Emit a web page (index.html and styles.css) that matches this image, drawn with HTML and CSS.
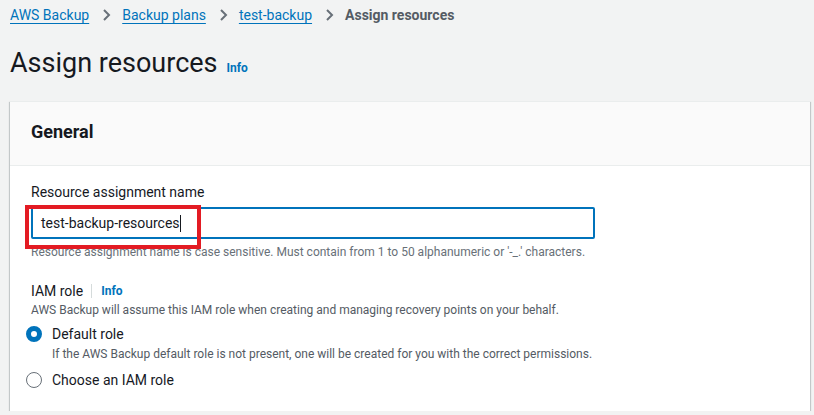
FILE: index.html
```html
<!DOCTYPE html>
<html>
<head>
<meta charset="utf-8">
<link rel="stylesheet" href="styles.css">
</head>
<body>
<nav class="crumbs">
  <a class="crumb" href="#">AWS Backup</a>
  <svg class="chev" width="16" height="16" viewBox="0 0 16 16"><path d="M6 3l5 5-5 5" fill="none" stroke="#687078" stroke-width="2"/></svg>
  <a class="crumb" href="#">Backup plans</a>
  <svg class="chev" width="16" height="16" viewBox="0 0 16 16"><path d="M6 3l5 5-5 5" fill="none" stroke="#687078" stroke-width="2"/></svg>
  <a class="crumb" href="#">test-backup</a>
  <svg class="chev" width="16" height="16" viewBox="0 0 16 16"><path d="M6 3l5 5-5 5" fill="none" stroke="#687078" stroke-width="2"/></svg>
  <span class="crumb-current">Assign resources</span>
</nav>
<h1 class="title">Assign resources <a class="info" href="#">Info</a></h1>
<section class="card">
  <header class="card-head"><h2>General</h2></header>
  <div class="card-body">
    <div class="field">
      <label class="label">Resource assignment name</label>
      <div class="input-wrap">
        <div class="input">test-backup-resources<span class="caret"></span></div>
        <div class="highlight"></div>
      </div>
      <p class="hint">Resource assignment name is case sensitive. Must contain from 1 to 50 alphanumeric or '-_.' characters.</p>
    </div>
    <div class="field iam">
      <div class="label-row"><span class="label">IAM role</span><span class="sep"></span><a class="info" href="#">Info</a></div>
      <p class="desc">AWS Backup will assume this IAM role when creating and managing recovery points on your behalf.</p>
      <div class="radio-row">
        <span class="radio checked"></span>
        <div>
          <div class="radio-label">Default role</div>
          <div class="radio-desc">If the AWS Backup default role is not present, one will be created for you with the correct permissions.</div>
        </div>
      </div>
      <div class="radio-row second">
        <span class="radio"></span>
        <div class="radio-label">Choose an IAM role</div>
      </div>
    </div>
  </div>
</section>
</body>
</html>
```
FILE: styles.css
```css
html, body { margin: 0; padding: 0; }
body {
  background: #f2f3f3;
  font-family: Roboto, "Noto Sans", sans-serif;
  color: #16191f;
  padding: 0 4px 0 10px;
  width: 800px;
}
.crumbs {
  display: flex;
  align-items: center;
  height: 29px;
  font-size: 14px;
}
.crumb { color: #0073bb; text-decoration: underline; text-underline-offset: 3px; }
.chev { margin: 0 8px 0 9px; }
.crumb-current { color: #545b64; font-weight: 700; }
.title {
  margin: 17px 0 0 0;
  font-size: 27px;
  font-weight: 400;
  line-height: 34px;
  display: flex;
  align-items: baseline;
}
.info { color: #0073bb; font-size: 12px; font-weight: 700; text-decoration: none; margin-left: 9px; }
.card {
  margin-top: 16px;
  background: #fff;
  box-shadow: 0 1px 1px 0 rgba(0,28,36,.3), 1px 1px 1px 0 rgba(0,28,36,.15), -1px 1px 1px 0 rgba(0,28,36,.15);
  border-top: 1px solid #eaeded;
}
.card-head {
  background: #fafafa;
  border-bottom: 1px solid #eaeded;
  padding: 16px 21px 20px;
}
.card-head h2 { margin: 0; font-size: 18px; font-weight: 700; line-height: 27px; }
.card-body { padding: 15px 20px 20px 21px; }
.label { font-size: 14px; line-height: 22px; display: block; }
.input-wrap { position: relative; margin-top: 4px; width: 564px; }
.input {
  height: 32px;
  box-sizing: border-box;
  border: 2px solid #0073bb;
  border-radius: 2px;
  padding: 0 8px;
  font-size: 14px;
  line-height: 28px;
  display: flex;
  align-items: center;
}
.caret { display: inline-block; width: 1px; height: 17px; background: #16191f; }
.highlight {
  position: absolute;
  left: -6px; top: -2px;
  width: 176px; height: 44px;
  box-sizing: border-box;
  border: 4px solid #e31b23;
}
.hint { margin: 4px 0 0; font-size: 12px; line-height: 18px; color: #687078; }
.iam { margin-top: 20px; }
.label-row { display: flex; align-items: center; height: 20px; }
.sep { width: 1px; height: 14px; background: #d5dbdb; margin: 0 9px 0 8px; }
.label-row .info { margin-left: 0; }
.label-row .label { display: inline; }
.desc { margin: 0; font-size: 12px; line-height: 18px; color: #545b64; }
.radio-row { display: flex; align-items: flex-start; margin-top: 4px; }
.radio-row.second { margin-top: 6px; }
.radio {
  width: 16px; height: 16px; box-sizing: border-box;
  border: 1px solid #687078; border-radius: 50%;
  margin: 3px 10px 0 -5px;
  flex: none;
}
.radio.checked { border: 5px solid #0073bb; }
.radio-label { font-size: 14px; line-height: 22px; }
.radio-desc { font-size: 12px; line-height: 18px; color: #545b64; }
```
